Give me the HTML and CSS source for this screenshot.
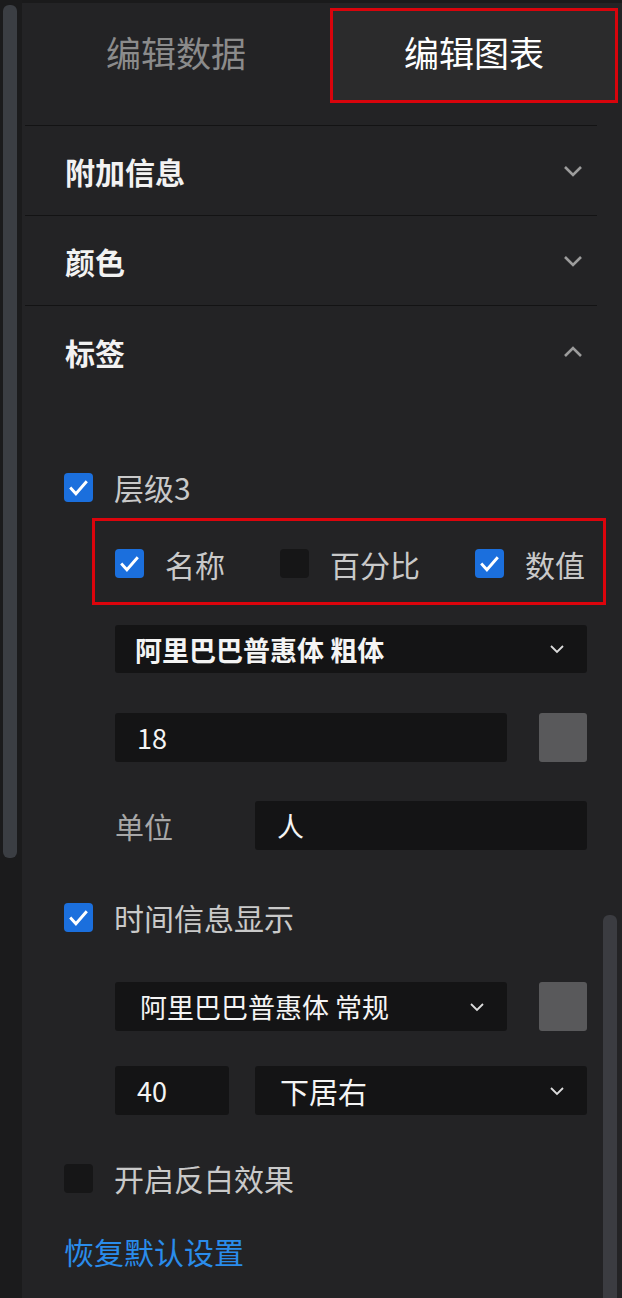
FILE: index.html
```html
<!DOCTYPE html>
<html lang="zh-CN">
<head>
    <meta charset="UTF-8">
    <meta name="viewport" content="width=device-width, initial-scale=1.0">
    <title>编辑图表</title>
    <link rel="stylesheet" href="styles.css">
</head>
<body>
    <div class="app">
        <!-- left gutter with page scrollbar -->
        <div class="gutter">
            <div class="gutter-thumb"></div>
        </div>

        <div class="panel">
            <div class="tabs">
                <div class="tab">编辑数据</div>
                <div class="tab active">编辑图表</div>
            </div>

            <div class="section">
                <div class="section-head">
                    <span>附加信息</span>
                    <svg class="chevron" viewBox="0 0 20 12"><polyline points="2,2 10,10 18,2"/></svg>
                </div>
            </div>
            <div class="section">
                <div class="section-head">
                    <span>颜色</span>
                    <svg class="chevron" viewBox="0 0 20 12"><polyline points="2,2 10,10 18,2"/></svg>
                </div>
            </div>
            <div class="section open">
                <div class="section-head">
                    <span>标签</span>
                    <svg class="chevron" viewBox="0 0 20 12"><polyline points="2,10 10,2 18,10"/></svg>
                </div>

                <div class="label-body">
                    <label class="check-row level-row">
                        <span class="box checked"><svg viewBox="0 0 28 28"><polyline points="6,14 11.5,20 22,8"/></svg></span>
                        <span>层级3</span>
                    </label>

                    <div class="highlight">
                        <label class="check-row">
                            <span class="box checked"><svg viewBox="0 0 28 28"><polyline points="6,14 11.5,20 22,8"/></svg></span>
                            <span>名称</span>
                        </label>
                        <label class="check-row">
                            <span class="box"></span>
                            <span>百分比</span>
                        </label>
                        <label class="check-row">
                            <span class="box checked"><svg viewBox="0 0 28 28"><polyline points="6,14 11.5,20 22,8"/></svg></span>
                            <span>数值</span>
                        </label>
                    </div>

                    <div class="indent">
                        <div class="field select bold font-select">
                            <span>阿里巴巴普惠体 粗体</span>
                            <svg class="caret" viewBox="0 0 16 10"><polyline points="2,2 8,8 14,2"/></svg>
                        </div>

                        <div class="row size-row">
                            <div class="field size-input">18</div>
                            <div class="swatch"></div>
                        </div>

                        <div class="row unit-row">
                            <span class="row-label">单位</span>
                            <div class="field wide">人</div>
                        </div>
                    </div>

                    <label class="check-row time-row">
                        <span class="box checked"><svg viewBox="0 0 28 28"><polyline points="6,14 11.5,20 22,8"/></svg></span>
                        <span>时间信息显示</span>
                    </label>

                    <div class="indent">
                        <div class="row font-row">
                            <div class="field select size-input regular-font">
                                <span>阿里巴巴普惠体 常规</span>
                                <svg class="caret" viewBox="0 0 16 10"><polyline points="2,2 8,8 14,2"/></svg>
                            </div>
                            <div class="swatch"></div>
                        </div>

                        <div class="row pos-row">
                            <div class="field short">40</div>
                            <div class="field select wide pos-select">
                                <span>下居右</span>
                                <svg class="caret" viewBox="0 0 16 10"><polyline points="2,2 8,8 14,2"/></svg>
                            </div>
                        </div>
                    </div>

                    <label class="check-row invert-row">
                        <span class="box"></span>
                        <span>开启反白效果</span>
                    </label>

                    <a class="reset">恢复默认设置</a>
                </div>
            </div>
        </div>

        <div class="side-thumb"></div>
    </div>
</body>
</html>
```

FILE: styles.css
```css
* {
    box-sizing: border-box;
}

html, body {
    margin: 0;
    height: 100%;
    background: #1b1b1c;
}

body {
    font-family: "Noto Sans CJK SC", "Noto Sans", sans-serif;
    color: #c9c9c9;
}

.app {
    position: relative;
    display: flex;
    width: 622px;
    height: 1298px;
    overflow: hidden;
}

.gutter {
    width: 22px;
    flex-shrink: 0;
    background: #1b1b1c;
    padding: 5px 0 0 3px;
}

.gutter-thumb {
    width: 14px;
    height: 853px;
    border-radius: 6px;
    background: #3b3e43;
}

.panel {
    flex: 1;
    background: #232325;
    border-top: 3px solid #1a1a1b;
}

/* tabs */
.tabs {
    display: flex;
    height: 123px;
    padding-top: 5px;
    margin: 0 25px 0 3px;
    border-bottom: 1px solid #131314;
}

.tab {
    width: 308px;
    height: 95px;
    display: flex;
    align-items: center;
    justify-content: center;
    padding-bottom: 8px;
    font-size: 35px;
    color: #8b8b8b;
    margin-left: -3px;
}

.tab.active {
    width: 288px;
    margin-left: 0;
    margin-right: -22px;
    flex-shrink: 0;
    background: #2b2b2c;
    border: 3px solid #d8040c;
    color: #ffffff;
}

/* collapsible sections */
.section-head {
    display: flex;
    align-items: center;
    justify-content: space-between;
    height: 90px;
    margin: 0 25px 0 3px;
    padding: 1px 14px 0 40px;
    border-bottom: 1px solid #131314;
    font-size: 30px;
    font-weight: bold;
    color: #f2f2f2;
}

.section.open .section-head {
    border-bottom: none;
}

.chevron {
    width: 20px;
    height: 12px;
    fill: none;
    stroke: #9c9c9c;
    stroke-width: 2.6;
}

/* label section body */
.label-body {
    padding-left: 42px;
}

.check-row {
    display: flex;
    align-items: center;
    gap: 21px;
    height: 30px;
    font-size: 30px;
    color: #c9c9c9;
}

.box {
    width: 29px;
    height: 29px;
    flex-shrink: 0;
    border-radius: 4px;
    background: #161617;
}

.box.checked {
    background: #1b6fdd;
}

.box svg {
    display: block;
    width: 29px;
    height: 29px;
    fill: none;
    stroke: #ffffff;
    stroke-width: 2.8;
}

.level-row {
    margin-top: 76px;
}

.highlight {
    display: flex;
    align-items: center;
    justify-content: space-between;
    width: 514px;
    height: 87px;
    margin: 16px 0 0 28px;
    padding: 4px 18px 0 20px;
    border: 3px solid #dc040c;
}

.indent {
    padding-left: 51px;
}

.row {
    display: flex;
    align-items: center;
}

.field {
    height: 49px;
    background: #141415;
    border-radius: 3px;
    display: flex;
    align-items: center;
    padding-left: 22px;
    font-size: 27px;
    color: #f4f4f4;
}

.select {
    justify-content: space-between;
    padding-right: 22px;
}

.bold {
    font-weight: bold;
}

.font-select {
    width: 472px;
    margin-top: 20px;
    height: 48px;
    padding-left: 20px;
}

.regular-font {
    padding-left: 25px;
}

.pos-select {
    padding-left: 25px;
    font-size: 29px;
}

.caret {
    width: 16px;
    height: 10px;
    fill: none;
    stroke: #dcdcdc;
    stroke-width: 1.8;
}

.size-row {
    margin-top: 40px;
    gap: 32px;
}

.size-input {
    width: 392px;
}

.swatch {
    width: 48px;
    height: 49px;
    border-radius: 3px;
    background: #59595b;
}

.unit-row {
    margin-top: 39px;
}

.row-label {
    width: 140px;
    font-size: 29px;
    color: #a8a8a8;
}

.wide {
    width: 332px;
}

.time-row {
    margin-top: 52px;
}

.font-row {
    margin-top: 50px;
    gap: 32px;
}

.pos-row {
    margin-top: 35px;
    gap: 26px;
}

.short {
    width: 114px;
}

.invert-row {
    margin-top: 48px;
}

.reset {
    display: block;
    margin-top: 36px;
    font-size: 30px;
    color: #2a8ceb;
    cursor: pointer;
}

/* inner scrollbar thumb on the right */
.side-thumb {
    position: absolute;
    right: 5px;
    top: 915px;
    width: 14px;
    height: 400px;
    border-radius: 6px;
    background: #3b3c41;
}
```
